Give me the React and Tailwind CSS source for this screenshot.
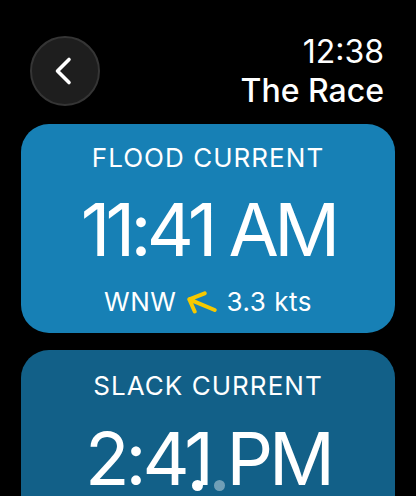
export default function App() {
  return (
    <div
      className="relative w-[416px] h-[496px] overflow-hidden bg-black text-white"
      style={{ fontFamily: 'Inter, "Noto Sans", sans-serif' }}
    >
      {/* header */}
      <div className="flex h-[124px] items-start justify-between pl-[30px] pr-[32px]">
        <button className="mt-[36px] flex h-[70px] w-[70px] items-center justify-center rounded-full border-2 border-[#353535] bg-[#1e1e1e]">
          <svg className="mr-[5px]" width="20" height="30" viewBox="0 0 20 30" fill="none">
            <path d="M16 3.5 L4.5 15 L16 26.5" stroke="white" strokeWidth="3.6" strokeLinecap="round" strokeLinejoin="round" />
          </svg>
        </button>
        <div className="pt-[32px] text-right text-[32px] leading-[39px]">
          <div className="font-normal">12:38</div>
          <div className="font-medium">The Race</div>
        </div>
      </div>

      {/* cards */}
      <div className="flex flex-col gap-[17px] px-[21px]">
        <div className="flex h-[209px] flex-col items-center rounded-[28px] bg-[#1780b5] pt-[18px]">
          <div className="text-[26px] leading-[32px] tracking-[0.04em]">FLOOD CURRENT</div>
          <div className="mt-[19px] text-[73px] leading-[73px] tracking-[-0.065em]">11:41 AM</div>
          <div className="mt-[20px] flex items-center text-[26px] leading-[32px] tracking-[0.02em]">
            <span>WNW</span>
            <svg className="ml-[11px] mr-[9px]" width="30" height="24" viewBox="0 0 30 24" fill="none">
              <path
                d="M2.3 9.3 L27.7 20 M2.3 9.3 L17.7 3.3 M2.3 9.3 L7.7 21.5"
                stroke="#f6c900"
                strokeWidth="4"
                strokeLinecap="round"
                strokeLinejoin="round"
              />
            </svg>
            <span>3.3 kts</span>
          </div>
        </div>

        <div className="flex h-[200px] flex-col items-center rounded-[28px] bg-[#126088] pt-[20px]">
          <div className="text-[26px] leading-[32px] tracking-[0.04em]">SLACK CURRENT</div>
          <div className="mt-[20px] text-[73px] leading-[73px] tracking-[-0.055em]">2:41 PM</div>
        </div>
      </div>

      {/* page dots */}
      <div className="absolute bottom-[5px] left-0 right-0 flex justify-center gap-[11px] pl-[1px]">
        <span className="h-[11px] w-[11px] rounded-full bg-white" />
        <span className="h-[11px] w-[11px] rounded-full bg-white/40" />
      </div>
    </div>
  );
}
